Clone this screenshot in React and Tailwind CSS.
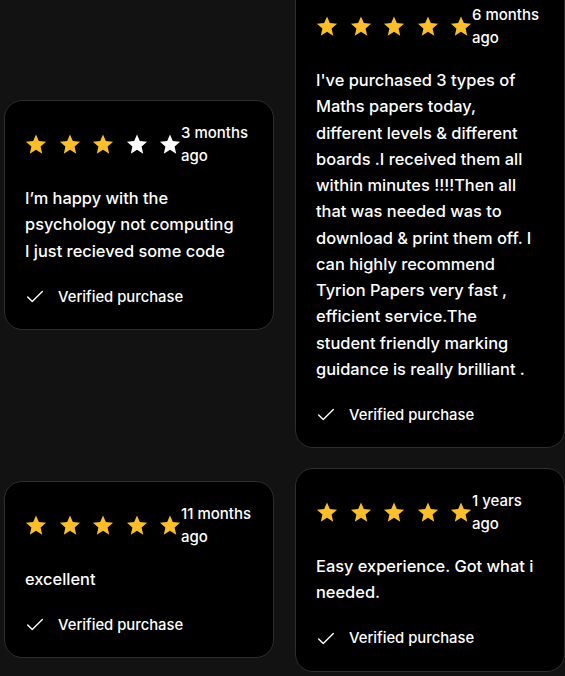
import React from "react";
import { Check } from "lucide-react";

function Star({ filled }) {
  return (
    <svg viewBox="0 0 24 24" className="w-[22px] h-[22px] shrink-0" fill={filled ? "#fcbf2b" : "#ffffff"}>
      <path d="M12 1.5l3.09 7.26 7.91.7-6 5.24 1.79 7.8L12 18.35 5.21 22.5 7 14.7 1 9.46l7.91-.7z" />
    </svg>
  );
}

function Card({ rating, time, children }) {
  return (
    <div className="w-[270px] rounded-[18px] border border-[#2e2e2e] bg-black p-5 text-white">
      <div className="flex items-center">
        <div className="flex items-center gap-[11.5px]">
          {[0, 1, 2, 3, 4].map((i) => (
            <Star key={i} filled={i < rating} />
          ))}
        </div>
        <div className="text-[15px] leading-[23px] font-medium">{time}</div>
      </div>
      <p className="mt-[18px] text-[16.4px] leading-[1.6] font-medium">{children}</p>
      <div className="mt-[21px] flex h-6 items-center gap-3">
        <Check size={22} strokeWidth={1.5} className="-ml-[1px] text-white" />
        <span className="text-[14.8px] font-medium">Verified purchase</span>
      </div>
    </div>
  );
}

export default function App() {
  return (
    <div
      className="h-[676px] w-[565px] overflow-hidden bg-[#121212]"
      style={{ fontFamily: "Inter, 'Noto Sans', sans-serif" }}
    >
      <div className="-mt-[18px] ml-1 grid grid-cols-[270px_270px] items-center gap-x-[21px] gap-y-[20px]">
        <Card rating={3} time="3 months ago">
          I’m happy with the<br />
          psychology not computing<br />
          I just recieved some code
        </Card>
        <Card rating={5} time="6 months ago">
          I've purchased 3 types of<br />
          Maths papers today,<br />
          different levels &amp; different<br />
          boards .I received them all<br />
          within minutes !!!!Then all<br />
          that was needed was to<br />
          download &amp; print them off. I<br />
          can highly recommend<br />
          Tyrion Papers very fast ,<br />
          efficient service.The<br />
          student friendly marking<br />
          guidance is really brilliant .
        </Card>
        <Card rating={5} time="11 months ago">
          excellent
        </Card>
        <Card rating={5} time="1 years ago">
          Easy experience. Got what i<br />
          needed.
        </Card>
      </div>
    </div>
  );
}
